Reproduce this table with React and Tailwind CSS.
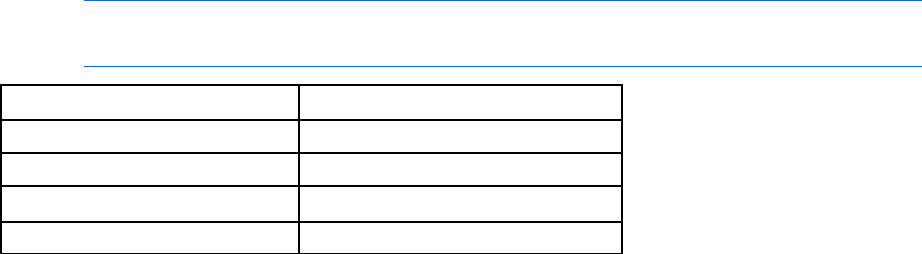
const rows = [35, 33, 33, 36, 32];

export default function App() {
  return (
    <div className="w-[922px] h-[254px] bg-white overflow-hidden">
      <div className="ml-[84px] h-[67px] border-t border-b border-[#0066ff]" />
      <div className="mt-[17px]">
        <table className="border-collapse border-2 border-black w-[623px]">
          <tbody>
            {rows.map((h, i) => (
              <tr key={i} style={{ height: h }}>
                <td className="border-2 border-black w-[298px] p-0"></td>
                <td className="border-2 border-black p-0"></td>
              </tr>
            ))}
          </tbody>
        </table>
      </div>
    </div>
  );
}
